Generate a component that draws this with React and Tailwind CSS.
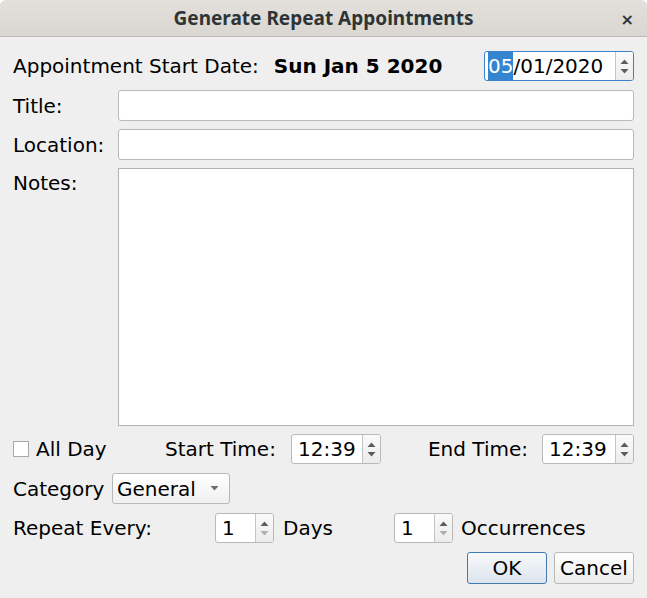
import React from "react";

const font = { fontFamily: "'DejaVu Sans', sans-serif" };

const Arrows = ({ downDisabled = false }) => (
    <div className="flex w-[18px] flex-col items-center justify-center gap-[5px] border-l border-[#c4c4c4] bg-gradient-to-b from-[#fafafa] to-[#ececec]">
        <svg width="9" height="5" viewBox="0 0 9 5">
            <path d="M0.5 5 L4.5 0.5 L8.5 5 Z" fill="#5c5c5c" />
        </svg>
        <svg width="9" height="5" viewBox="0 0 9 5">
            <path d="M0.5 0 L4.5 4.5 L8.5 0 Z" fill={downDisabled ? "#b0b0b0" : "#5c5c5c"} />
        </svg>
    </div>
);

const Spinner = ({ value, width, downDisabled }) => (
    <div className={`flex h-[30px] ${width} overflow-hidden rounded-[3px] border border-[#b9b9b9] bg-white`}>
        <div className="flex flex-1 items-center pl-[6px] text-black">{value}</div>
        <Arrows downDisabled={downDisabled} />
    </div>
);

const TextField = () => (
    <div className="h-[31px] flex-1 rounded-[3px] border border-[#b9b9b9] bg-white" />
);

export default function App() {
    return (
        <div className="h-[598px] w-[647px] bg-white" style={font}>
            <div className="flex h-full flex-col overflow-hidden rounded-t-[6px] bg-[#efefef]">
                {/* title bar */}
                <div className="relative flex h-[37px] shrink-0 items-center justify-center border-b border-[#bdb8b2] bg-gradient-to-b from-[#e3e0dc] to-[#dad6d1]">
                    <span
                        className="pt-[1px] text-[19px] font-bold text-[#2e3436]"
                        style={{ fontFamily: "'Noto Sans', sans-serif" }}
                    >
                        Generate Repeat Appointments
                    </span>
                    <span className="absolute right-[13px] top-[8px] text-[16px] font-bold text-[#2e3436]">×</span>
                </div>

                <div className="flex flex-col px-[13px] text-[20px] text-black">
                    {/* start date */}
                    <div className="mt-[14px] flex h-[30px] items-center">
                        <span>Appointment Start Date:</span>
                        <span className="ml-[15px] font-bold">Sun Jan 5 2020</span>
                        <div className="ml-auto flex h-[30px] w-[150px] overflow-hidden rounded-[3px] border border-[#3b83c9] bg-white">
                            <div className="flex flex-1 items-center pl-[3px]">
                                <span className="bg-[#3584d0] text-white">05</span>
                                <span>/01/2020</span>
                            </div>
                            <Arrows />
                        </div>
                    </div>

                    {/* title */}
                    <div className="mt-[9px] flex items-center">
                        <span className="w-[105px]">Title:</span>
                        <TextField />
                    </div>

                    {/* location */}
                    <div className="mt-[8px] flex items-center">
                        <span className="w-[105px]">Location:</span>
                        <TextField />
                    </div>

                    {/* notes */}
                    <div className="mt-[8px] flex">
                        <span className="w-[105px]">Notes:</span>
                        <div className="h-[258px] flex-1 border border-[#b3b3b3] bg-white" />
                    </div>

                    {/* times */}
                    <div className="mt-[8px] flex h-[30px] items-center">
                        <div className="flex w-[152px] items-center">
                            <div className="h-[16px] w-[16px] border border-[#a8a8a8] bg-white" />
                            <span className="ml-[7px]">All Day</span>
                        </div>
                        <span className="w-[126px]">Start Time:</span>
                        <Spinner value="12:39" width="w-[90px]" />
                        <span className="flex-1 pr-[14px] text-right">End Time:</span>
                        <Spinner value="12:39" width="w-[92px]" />
                    </div>

                    {/* category */}
                    <div className="mt-[9px] flex h-[31px] items-center">
                        <span className="w-[99px]">Category</span>
                        <div className="flex h-[31px] w-[118px] items-center rounded-[3px] border border-[#b9b9b9] bg-gradient-to-b from-white to-[#f0f0f0] pl-[4px]">
                            <span>General</span>
                            <svg className="ml-auto mr-[10px]" width="9" height="5" viewBox="0 0 9 5">
                                <path d="M0.5 0 L4.5 4.5 L8.5 0 Z" fill="#6e6e6e" />
                            </svg>
                        </div>
                    </div>

                    {/* repeat */}
                    <div className="mt-[9px] flex h-[30px] items-center">
                        <span className="w-[202px]">Repeat Every:</span>
                        <Spinner value="1" width="w-[59px]" downDisabled />
                        <span className="w-[120px] pl-[9px]">Days</span>
                        <Spinner value="1" width="w-[59px]" downDisabled />
                        <span className="pl-[8px]">Occurrences</span>
                    </div>

                    {/* buttons */}
                    <div className="mt-[9px] flex justify-end gap-[7px]">
                        <button className="h-[32px] w-[80px] rounded-[3px] border border-[#3f7bb0] bg-gradient-to-b from-[#f7f9fb] to-[#dce4ec]">
                            OK
                        </button>
                        <button className="h-[32px] w-[80px] rounded-[3px] border border-[#b9b9b9] bg-gradient-to-b from-white to-[#ececec]">
                            Cancel
                        </button>
                    </div>
                </div>
            </div>
        </div>
    );
}
